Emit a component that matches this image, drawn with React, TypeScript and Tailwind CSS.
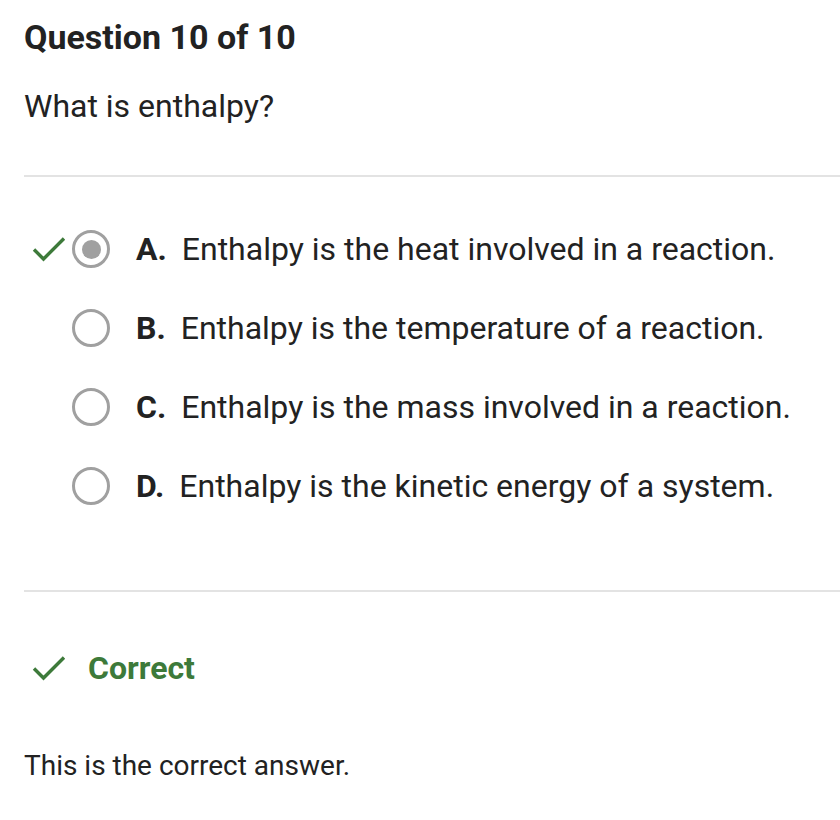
import React from 'react';

const options = [
  { letter: 'A.', text: 'Enthalpy is the heat involved in a reaction.', selected: true },
  { letter: 'B.', text: 'Enthalpy is the temperature of a reaction.', selected: false },
  { letter: 'C.', text: 'Enthalpy is the mass involved in a reaction.', selected: false },
  { letter: 'D.', text: 'Enthalpy is the kinetic energy of a system.', selected: false },
];

function Check({ className }: { className?: string }) {
  return (
    <svg viewBox="0 0 34 26" className={className} fill="none">
      <path d="M2 13.5 L11.5 23 L32 2.5" stroke="#3d7a3a" strokeWidth="3.4" />
    </svg>
  );
}

function Radio({ selected }: { selected: boolean }) {
  return (
    <span className="flex h-[38px] w-[38px] items-center justify-center rounded-full border-[3px] border-[#a0a0a0]">
      {selected && <span className="h-[19px] w-[19px] rounded-full bg-[#a0a0a0]" />}
    </span>
  );
}

export default function App() {
  return (
    <div className="min-h-[820px] bg-white pl-6 text-[#222] font-['Roboto',sans-serif]">
      <h1 className="pt-[17px] text-[34px] font-bold leading-[40px]">Question 10 of 10</h1>
      <p className="mt-[29px] text-[32px] leading-[40px]">What is enthalpy?</p>
      <div className="mt-[49px] h-[2px] bg-[#e3e3e3]" />

      <ul className="mt-[52px] flex flex-col gap-[39px]">
        {options.map((o) => (
          <li key={o.letter} className="flex h-[40px] items-center">
            <span className="flex w-[48px] justify-start pl-[8px]">
              {o.selected && <Check className="h-[26px] w-[34px]" />}
            </span>
            <Radio selected={o.selected} />
            <span className="ml-[26px] text-[32px] leading-[40px]">
              <span className="font-bold">{o.letter}</span>
              <span className="ml-[15px]">{o.text}</span>
            </span>
          </li>
        ))}
      </ul>

      <div className="mt-[84px] h-[2px] bg-[#e3e3e3]" />

      <div className="mt-[56px] flex h-[40px] items-center">
        <Check className="ml-[8px] h-[26px] w-[34px]" />
        <span className="ml-[22px] text-[32px] font-bold leading-[40px] text-[#3d7a3a]">Correct</span>
      </div>

      <p className="mt-[58px] text-[28px] leading-[40px]">This is the correct answer.</p>
    </div>
  );
}
